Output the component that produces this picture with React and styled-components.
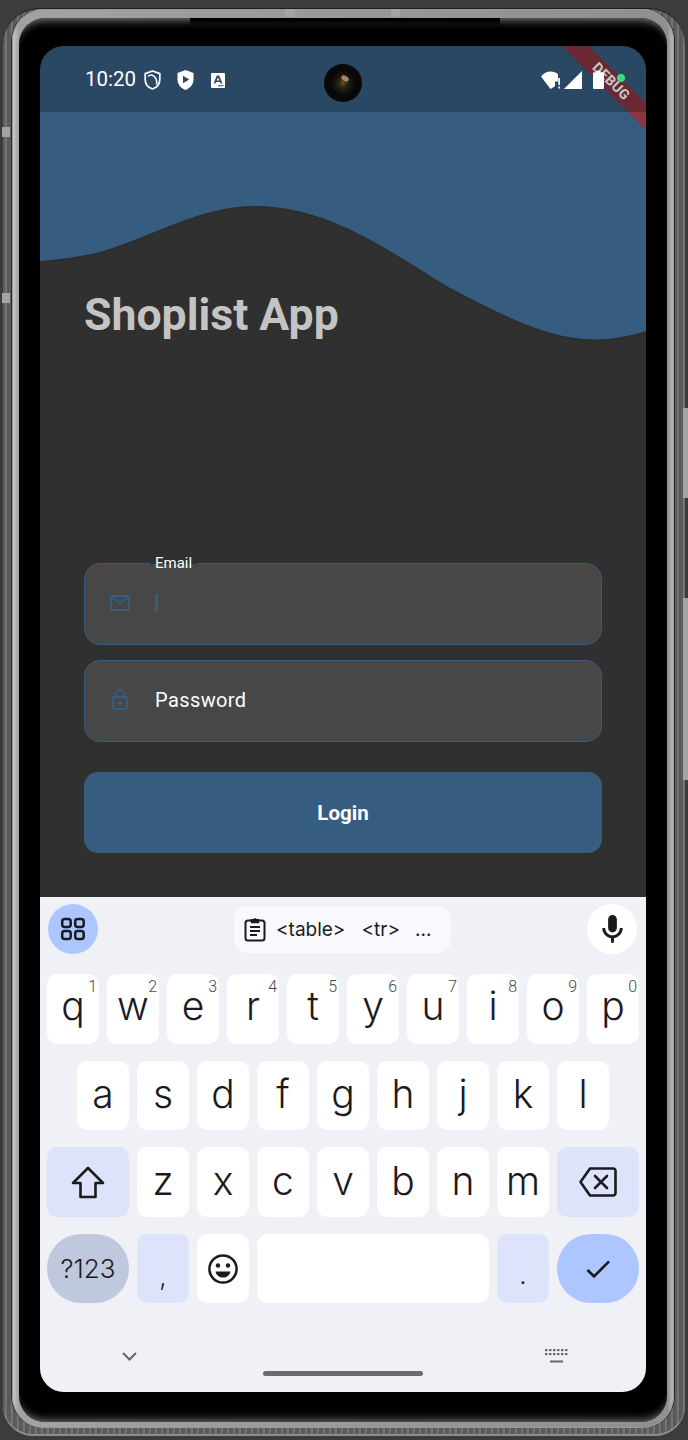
import React from 'react';
import styled, { createGlobalStyle } from 'styled-components';

const Global = createGlobalStyle`
  html, body { margin: 0; padding: 0; background: #3c3c3c; }
  * { box-sizing: border-box; }
`;

const Page = styled.div`
  width: 688px; height: 1440px; padding: 8px 3px 4px; display: flex; overflow: hidden;
  position: relative; background: #3c3c3c; font-family: Roboto, "Liberation Sans", sans-serif;
`;
const Device = styled.div`
  flex: 1; padding: 0 11px 8px 9px; border-top: 1px solid #1d1d1d; border-radius: 36px 36px 30px 30px;
  background: repeating-linear-gradient(90deg, #5e5e5e 0 2px, #747474 2px 4px, #585858 4px 6px);
  box-shadow: inset 0 -2px 0 #8c8c8c;
`;
const Rim = styled.div`
  padding: 9px 7px 6px; border-radius: 32px; height: 100%;
  background: linear-gradient(90deg, #cfcfcf 0, #a2a2a2 1%, #8f8f8f 99%, #c2c2c2 100%);
  box-shadow: inset 0 0 0 1px #9a9a9a, -1px 0 0 #2a2a2a, 1px 0 0 #2a2a2a;
`;
const Bezel = styled.div`
  height: 100%; padding: 28px 21px 30px; background: #000; border-radius: 26px;
  box-shadow: inset 0 9px 9px -7px #808080, inset 0 -9px 9px -7px #707070;
`;
const Screen = styled.div`
  position: relative; height: 1346px; border-radius: 24px; overflow: hidden;
  display: flex; flex-direction: column; background: linear-gradient(#365c80 0 66px, #303030 66px);
`;
const Tick = styled.div`
  position: absolute; left: ${p => p.$x}px; top: ${p => p.$y}px; width: ${p => p.$w}px; height: ${p => p.$h}px;
  background: ${p => p.$bg || '#a4a4a4'};
`;

const StatusBar = styled.div`
  height: 66px; flex: none; background: rgba(0, 0, 0, 0.22); display: flex; align-items: center; justify-content: space-between;
  padding: 2px 21px 0 45px; position: relative; z-index: 2; color: #fff;
`;
const StatusGroup = styled.div`display: flex; align-items: center; gap: ${p => p.$gap}px;`;
const Time = styled.span`font-size: 20.5px; line-height: 24px; width: 51px; margin-right: -8px; margin-bottom: 3px;`;
const Camera = styled.div`
  position: absolute; left: 284px; top: 18px; width: 38px; height: 38px; border-radius: 50%;
  background: radial-gradient(circle at 50% 50%, #6b5a20 0, #35300f 12%, #1a1a14 26%, #080808 46%, #0a0a0a 100%);
`;
const CameraGlint = styled.div`
  position: absolute; left: 17px; top: 12px; width: 8px; height: 5px; border-radius: 50%;
  background: #b08060; transform: rotate(30deg);
`;
const GreenDot = styled.span`
  width: 8px; height: 8px; border-radius: 50%; background: #3ddc84; margin: -4px 0 0 9px;
`;
const Ribbon = styled.div`
  position: absolute; z-index: 1; right: -45px; top: 25.5px; width: 160px; height: 19px; transform: rotate(45deg);
  background: rgba(183, 28, 28, 0.63); color: #fff; font-weight: 700; font-size: 14px; line-height: 19px;
  text-align: center; letter-spacing: .3px;
`;

const Main = styled.main`
  position: relative; flex: 1; background: #303030; padding: 178px 44px 44px; display: flex; flex-direction: column;
`;
const Wave = styled.svg`
  position: absolute; left: 0; top: 0; width: 606px; height: 240px; filter: drop-shadow(0 1px 1px rgba(0,0,0,.12));
`;
const Title = styled.h1`
  position: relative; margin: 0; font-size: 44.6px; line-height: 50px; font-weight: 700; color: #c4c4c4;
`;
const Form = styled.form`margin-top: auto; display: flex; flex-direction: column; gap: 15px;`;
const Field = styled.div`
  position: relative; height: 82px; border: 1.5px solid #365c80; border-radius: 16px; background: #474747;
  display: flex; align-items: center; padding-left: 22.5px; gap: 23.5px;
`;
const FieldIcon = styled.svg`width: 24px; height: 24px; fill: #365c80; flex: none; margin-top: -3px;`;
const FloatLabel = styled.label`
  position: absolute; left: 65px; top: -11px; padding: 0 5px; height: 20px; font-size: 15px; line-height: 20px; color: #fff;
  background: linear-gradient(#303030 0 11px, #474747 11px);
`;
const Caret = styled.span`width: 3px; height: 18px; background: #365c80; margin-top: -3px;`;
const Placeholder = styled.span`font-size: 20px; line-height: 24px; color: #fff; margin-top: -3px; letter-spacing: .4px;`;
const LoginButton = styled.button`
  margin-top: 15px; height: 81px; border: 0; border-radius: 14px; background: #365c80; color: #fff;
  font: 700 20.5px Roboto, sans-serif; padding: 0;
`;

const Keyboard = styled.div`
  position: relative; flex: none; height: 495px; background: #f0f0f7; padding: 7px 7px 0; display: flex; flex-direction: column;
  font-family: Inter, "Noto Sans", sans-serif; color: #1b1b1f;
`;
const Toolbar = styled.div`display: flex; align-items: center; justify-content: space-between; height: 50px; padding: 0 2px 0 1px; margin-bottom: 20px;`;
const RoundButton = styled.div`
  width: 50px; height: 50px; border-radius: 50%; background: ${p => p.$bg}; display: flex; align-items: center; justify-content: center;
`;
const Chip = styled.div`
  width: 217px; height: 47px; border-radius: 13px; background: #f8f8fd; display: flex; align-items: center;
  padding-left: 10px; color: #1b1b1f;
`;
const ChipText = styled.span`margin-left: ${p => p.$ml}px; font-family: Inter, sans-serif; font-size: 19px;`;
const Rows = styled.div`display: flex; flex-direction: column; gap: 17.17px;`;
const Row = styled.div`display: flex; gap: 8px; height: 69.5px; padding: 0 ${p => p.$pad || 0}px;`;
const Key = styled.div`
  position: relative; flex: ${p => p.$grow ? '1' : 'none'}; width: ${p => p.$w || 52}px; height: 100%;
  border-radius: ${p => p.$r || 10}px; background: ${p => p.$bg || '#fff'};
  display: flex; align-items: center; justify-content: center;
  font-size: ${p => p.$size || 39}px; line-height: 1; color: #1b1b1f; font-weight: 350;
  padding-top: ${p => p.$pt || 0}px; padding-bottom: ${p => p.$pb || 0}px;
`;
const Hint = styled.span`
  position: absolute; top: 4px; right: 2px; font-size: 16px; line-height: 18px; color: #47474d; font-family: Roboto, sans-serif;
`;
const Nav = styled.div`flex: 1; display: flex; flex-direction: column; padding-top: 46px; position: relative;`;
const NavIcons = styled.div`display: flex; justify-content: space-between; height: 14px; padding: 0 71px 0 75px; align-items: center;`;
const HomeBar = styled.div`width: 160px; height: 5px; border-radius: 3px; background: #6b6b6b; margin: 8px auto 0;`;

const Icon = styled.svg`display: block; flex: none;`;

const keysRow1 = [['q','1'],['w','2'],['e','3'],['r','4'],['t','5'],['y','6'],['u','7'],['i','8'],['o','9'],['p','0']];

export default function App() {
  return (
    <Page>
      <Global />
      <Device>
        <Rim>
          <Bezel>
            <Screen>
              <StatusBar>
                <StatusGroup $gap={16}>
                  <Time>10:20</Time>
                  <Icon width="17" height="20" viewBox="0 0 17 20">
                    <path d="M8.5 1 15.8 3.6V9.5C15.8 14 12.8 17.6 8.5 19 4.2 17.6 1.2 14 1.2 9.5V3.6Z" fill="none" stroke="#fff" strokeWidth="1.7" strokeLinejoin="round"/>
                    <path d="M4 6.5C7 3.8 10 5 12 8.8 13 11 13 13 12.5 14.5" fill="none" stroke="#fff" strokeWidth="1.6"/>
                  </Icon>
                  <Icon width="17" height="20" viewBox="0 0 17 20">
                    <path fillRule="evenodd" d="M8.5 0 16.5 3V9.5C16.5 14.2 13 18.4 8.5 20 4 18.4 .5 14.2 .5 9.5V3ZM6 5.8V13.2L12.2 9.5Z" fill="#fff"/>
                  </Icon>
                  <Icon width="14" height="15" viewBox="0 0 14 15" style={{ marginLeft: 1 }}>
                    <path fillRule="evenodd" d="M1 0H13A1 1 0 0 1 14 1V14A1 1 0 0 1 13 15H1A1 1 0 0 1 0 14V1A1 1 0 0 1 1 0ZM5.8 2.5 2.6 10.5H4.4L5 8.9H9L9.6 10.5H11.4L8.2 2.5ZM7 4.6 8.4 7.5H5.6ZM7 12.2V13.2H12.5V12.2Z" fill="#fff"/>
                  </Icon>
                </StatusGroup>
                <Camera><CameraGlint /></Camera>
                <StatusGroup $gap={4}>
                  <Icon width="19" height="18" viewBox="0 0 19 18">
                    <path d="M0 5.5C2.5 2 6 .5 9.5.5 12.5.5 15.5 1.6 17 3.2V10.5H14V15.2L9.5 18Z" fill="#fff"/>
                    <path d="M17.3 7H19V14H17.3ZM17.3 15.5H19V17.5H17.3Z" fill="#fff"/>
                  </Icon>
                  <Icon width="18" height="18" viewBox="0 0 18 18"><path d="M18 0V18H0Z" fill="#fff"/></Icon>
                  <Icon width="11" height="18" viewBox="0 0 11 18" style={{ marginLeft: 7 }}>
                    <path d="M3.5 0H7.5V1.2H10A1 1 0 0 1 11 2.2V17A1 1 0 0 1 10 18H1A1 1 0 0 1 0 17V2.2A1 1 0 0 1 1 1.2H3.5Z" fill="#fff"/>
                  </Icon>
                  <GreenDot />
                </StatusGroup>
              </StatusBar>
              <Main>
                <Wave viewBox="0 0 606 240">
                  <path d="M0 0H606V219C590 224 575 227 555 227.5 510 227 470 207 410 176 350 140 290 94 215 94 160 94 120 122 60 140 40 145 20 147 0 149Z" fill="#365c80"/>
                </Wave>
                <Title>Shoplist App</Title>
                <Form>
                  <Field>
                    <FloatLabel>Email</FloatLabel>
                    <FieldIcon viewBox="0 0 24 24"><path d="M20 4H4c-1.1 0-1.99.9-1.99 2L2 18c0 1.1.9 2 2 2h16c1.1 0 2-.9 2-2V6c0-1.1-.9-2-2-2zm0 14H4V8l8 5 8-5v10zm-8-7L4 6h16l-8 5z"/></FieldIcon>
                    <Caret />
                  </Field>
                  <Field>
                    <FieldIcon viewBox="0 0 24 24"><path d="M12 17c1.1 0 2-.9 2-2s-.9-2-2-2-2 .9-2 2 .9 2 2 2zm6-9h-1V6c0-2.76-2.24-5-5-5S7 3.24 7 6v2H6c-1.1 0-2 .9-2 2v10c0 1.1.9 2 2 2h12c1.1 0 2-.9 2-2V10c0-1.1-.9-2-2-2zM8.9 6c0-1.71 1.39-3.1 3.1-3.1s3.1 1.39 3.1 3.1v2H8.9V6zM18 20H6V10h12v10z"/></FieldIcon>
                    <Placeholder>Password</Placeholder>
                  </Field>
                  <LoginButton type="button">Login</LoginButton>
                </Form>
              </Main>
              <Ribbon>DEBUG</Ribbon>
              <Keyboard>
                <Toolbar>
                  <RoundButton $bg="#aec6ff">
                    <Icon width="26" height="24" viewBox="0 0 26 24" fill="none" stroke="#1b1b1f" strokeWidth="2.5">
                      <rect x="2.2" y="2" width="8.5" height="8" rx="2.5"/><rect x="15.2" y="2" width="8.5" height="8" rx="2.5"/>
                      <rect x="2.2" y="14" width="8.5" height="8" rx="2.5"/><rect x="15.2" y="14" width="8.5" height="8" rx="2.5"/>
                    </Icon>
                  </RoundButton>
                  <Chip>
                    <Icon width="22" height="25" viewBox="0 0 22 25" fill="none" stroke="#1b1b1f" strokeWidth="2">
                      <rect x="1.5" y="3.5" width="19" height="20" rx="2.5"/>
                      <path d="M7.5 5.5V2.8H9.5C9.7 1.5 12.3 1.5 12.5 2.8H14.5V5.5Z" fill="#1b1b1f" strokeWidth="1.4"/>
                      <path d="M6 10H16M6 14H16M6 18H13" strokeWidth="1.8"/>
                    </Icon>
                    <ChipText $ml={10}>&lt;table&gt;</ChipText>
                    <ChipText $ml={16}>&lt;tr&gt;</ChipText>
                    <ChipText $ml={15}>...</ChipText>
                  </Chip>
                  <RoundButton $bg="#fff">
                    <Icon width="35" height="35" viewBox="0 0 24 24" fill="#1b1b1f">
                      <path d="M12 14c1.66 0 3-1.34 3-3V5c0-1.66-1.34-3-3-3S9 3.34 9 5v6c0 1.66 1.34 3 3 3zm5-3c0 2.76-2.24 5-5 5s-5-2.24-5-5H5c0 3.53 2.61 6.43 6 6.92V21h2v-3.08c3.39-.49 6-3.39 6-6.92h-2z"/>
                    </Icon>
                  </RoundButton>
                </Toolbar>
                <Rows>
                  <Row>{keysRow1.map(([k, n]) => <Key key={k} $pb={6}>{k}<Hint>{n}</Hint></Key>)}</Row>
                  <Row $pad={30}>{'asdfghjkl'.split('').map(k => <Key key={k} $pb={4}>{k}</Key>)}</Row>
                  <Row>
                    <Key $w={82} $bg="#dde3fa">
                      <Icon width="34" height="33" viewBox="0 0 34 33" fill="none" stroke="#1b1b1f" strokeWidth="2.6" strokeLinejoin="round">
                        <path d="M17 2 32 17H24.5V31H9.5V17H2Z"/>
                      </Icon>
                    </Key>
                    {'zxcvbnm'.split('').map(k => <Key key={k} $pb={4}>{k}</Key>)}
                    <Key $w={82} $bg="#dde3fa">
                      <Icon width="38" height="30" viewBox="0 0 38 30" fill="none" stroke="#1b1b1f" strokeWidth="2.6" strokeLinejoin="round">
                        <path d="M11 1.5H34A2.5 2.5 0 0 1 36.5 4V26A2.5 2.5 0 0 1 34 28.5H11L1.5 15Z"/>
                        <path d="M16 9 28 21M28 9 16 21" strokeLinecap="round"/>
                      </Icon>
                    </Key>
                  </Row>
                  <Row>
                    <Key $w={82} $bg="#c0c8de" $r={34} $size={26}>?123</Key>
                    <Key $bg="#dde3fa" $size={26} $pt={16}>,</Key>
                    <Key>
                      <Icon width="30" height="30" viewBox="0 0 30 30">
                        <circle cx="15" cy="15" r="13.6" fill="none" stroke="#1b1b1f" strokeWidth="2.5"/>
                        <circle cx="10" cy="11.5" r="2.2" fill="#1b1b1f"/><circle cx="20" cy="11.5" r="2.2" fill="#1b1b1f"/>
                        <path d="M7.5 17.5H22.5C21.5 21.5 18.5 23.5 15 23.5 11.5 23.5 8.5 21.5 7.5 17.5Z" fill="#1b1b1f"/>
                      </Icon>
                    </Key>
                    <Key $grow />
                    <Key $bg="#dde3fa" $size={26} $pt={13}>.</Key>
                    <Key $w={82} $bg="#aec6ff" $r={34}>
                      <Icon width="32" height="32" viewBox="0 0 24 24" fill="#1b1b1f"><path d="M9 16.17 4.83 12l-1.42 1.41L9 19 21 7l-1.41-1.41z"/></Icon>
                    </Key>
                  </Row>
                </Rows>
                <Nav>
                  <NavIcons>
                    <Icon width="15" height="9" viewBox="0 0 15 9" fill="none" stroke="#666" strokeWidth="2"><path d="M1 1 7.5 7.5 14 1"/></Icon>
                    <Icon width="23" height="14" viewBox="0 0 23 14" fill="#666">
                      {[0,4,8,12,16,20].map(x => <rect key={x} x={x} y="0" width="2.4" height="2.2"/>)}
                      {[0,4,8,12,16,20].map(x => <rect key={x} x={x} y="4" width="2.4" height="2.2"/>)}
                      <rect x="5" y="11.5" width="13" height="2"/>
                    </Icon>
                  </NavIcons>
                  <HomeBar />
                </Nav>
              </Keyboard>
            </Screen>
          </Bezel>
        </Rim>
      </Device>
      <Tick $x={2} $y={127} $w={8} $h={10} />
      <Tick $x={2} $y={293} $w={8} $h={10} />
      <Tick $x={285} $y={9} $w={10} $h={8} />
      <Tick $x={391} $y={9} $w={9} $h={8} />
      <Tick $x={190} $y={18} $w={310} $h={9} $bg="linear-gradient(#000 30%, transparent)" />
      <Tick $x={683} $y={408} $w={5} $h={90} />
      <Tick $x={683} $y={598} $w={5} $h={182} />
    </Page>
  );
}
